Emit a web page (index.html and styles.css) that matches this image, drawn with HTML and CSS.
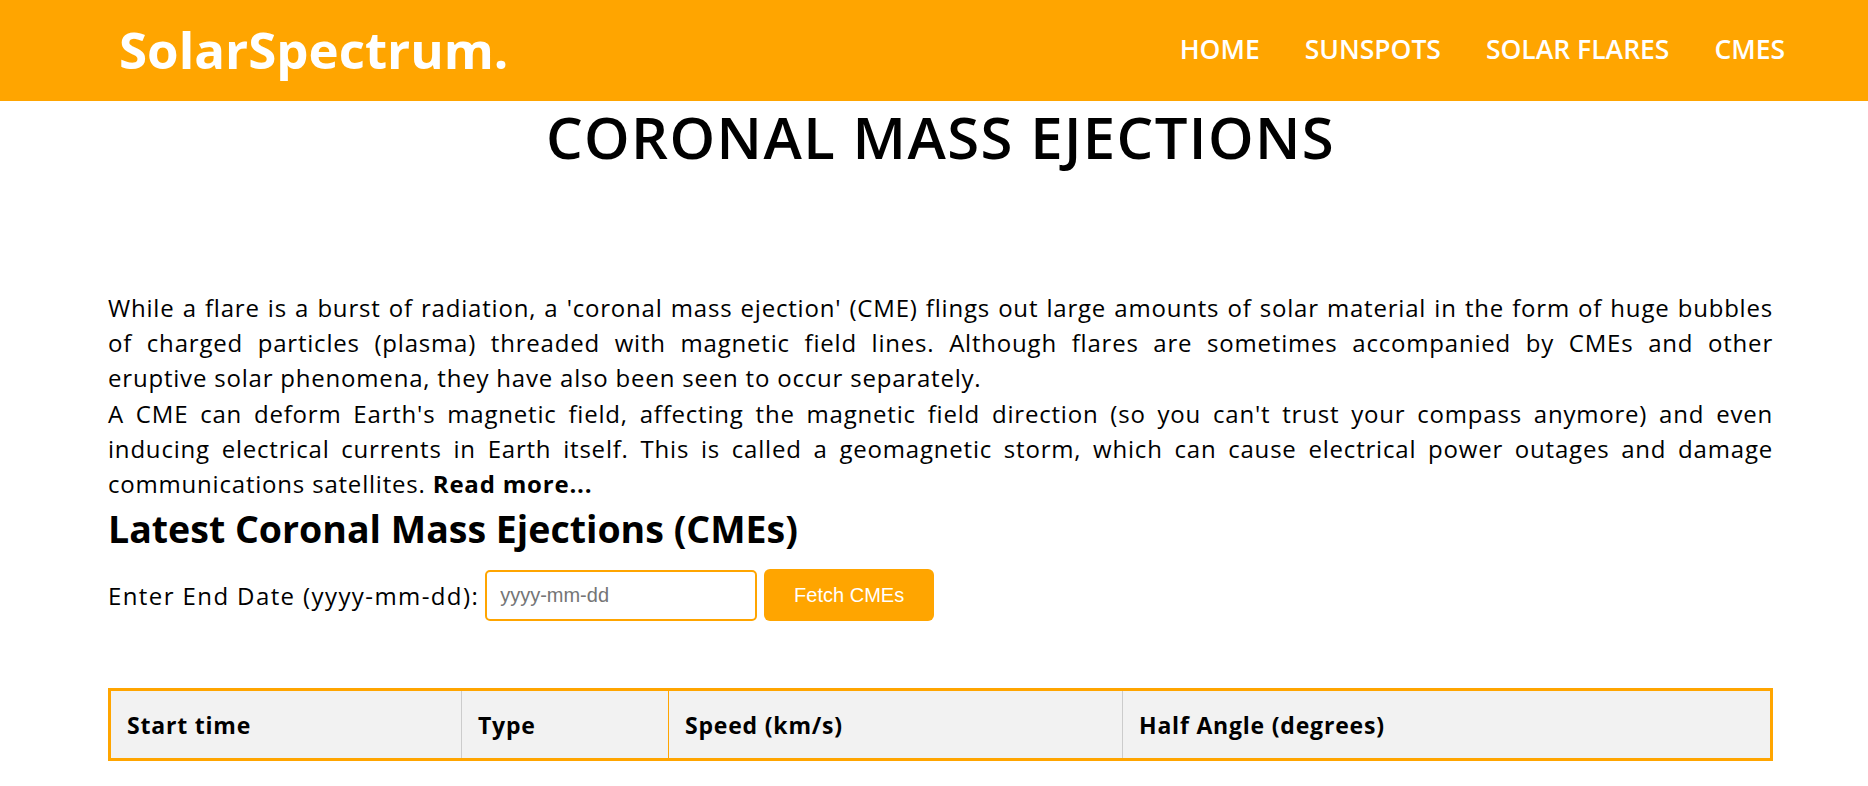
FILE: index.html
```html
<!DOCTYPE html>
<html lang="en">
<head>
<meta charset="utf-8">
<title>SolarSpectrum - CMEs</title>
<link rel="stylesheet" href="styles.css">
</head>
<body>
<header class="site-header">
  <div class="logo">SolarSpectrum.</div>
  <nav>
    <ul class="nav-list">
      <li><a href="#">HOME</a></li>
      <li><a href="#">SUNSPOTS</a></li>
      <li><a href="#">SOLAR FLARES</a></li>
      <li><a href="#">CMES</a></li>
    </ul>
  </nav>
</header>
<main class="content">
  <h1 class="page-title">CORONAL MASS EJECTIONS</h1>
  <p class="intro"><span class="intro-lead">While a flare is a burst of radiation, a 'coronal mass ejection' (CME) flings out large amounts of solar material in the form of huge bubbles of charged particles (plasma) threaded with magnetic field lines. Although flares are sometimes accompanied by CMEs and other</span> eruptive solar phenomena, they have also been seen to occur separately.<br>A CME can deform Earth's magnetic field, affecting the magnetic field direction (so you can't trust your compass anymore) and even inducing electrical currents in Earth itself. This is called a geomagnetic storm, which can cause electrical power outages and damage communications satellites. <a class="read-more" href="#">Read more...</a></p>
  <h2 class="section-title">Latest Coronal Mass Ejections (CMEs)</h2>
  <form class="date-form">
    <label class="date-label" for="endDate">Enter End Date (yyyy-mm-dd):</label>
    <input class="date-input" id="endDate" type="text" placeholder="yyyy-mm-dd">
    <button class="fetch-btn" type="button">Fetch CMEs</button>
  </form>
  <table class="cme-table">
    <thead>
      <tr>
        <th class="col-start">Start time</th>
        <th class="col-type">Type</th>
        <th class="col-speed">Speed (km/s)</th>
        <th class="col-angle">Half Angle (degrees)</th>
      </tr>
    </thead>
  </table>
</main>
</body>
</html>
```

FILE: styles.css
```css
* { box-sizing: border-box; }
body {
  margin: 0;
  font-family: "Open Sans", "Liberation Sans", sans-serif;
  color: #000;
  background: #fff;
}
.site-header {
  display: flex;
  align-items: center;
  justify-content: space-between;
  height: 101px;
  padding: 0 83px 0 119px;
  background: #ffa500;
}
.logo {
  margin-bottom: 4px;
  font-family: "Open Sans", sans-serif;
  font-weight: 700;
  font-size: 51px;
  color: #fff;
}
.nav-list {
  display: flex;
  gap: 45px;
  margin: 0;
  padding: 0 0 4px;
  list-style: none;
}
.nav-list a {
  color: #fff;
  text-decoration: none;
  font-weight: 600;
  font-size: 26.5px;
}
.content {
  padding: 0 95px 0 108px;
}
.page-title {
  margin: 0;
  padding-top: 1px;
  text-align: center;
  font-family: "Open Sans", sans-serif;
  font-weight: 600;
  font-size: 58px;
  letter-spacing: 1.4px;
  line-height: 70px;
}
.intro {
  margin: 118px 0 0;
  font-size: 24px;
  letter-spacing: 0.8px;
  line-height: 35.2px;
  text-align: justify;
}
.intro-lead {
  display: block;
  text-align-last: justify;
}
.read-more {
  color: #000;
  font-weight: 700;
  text-decoration: none;
}
.section-title {
  margin: 6px 0 0;
  font-size: 37.5px;
  font-weight: 700;
  line-height: 44px;
}
.date-form {
  display: flex;
  align-items: center;
  margin-top: 18px;
}
.date-label {
  font-size: 24px;
  letter-spacing: 1.4px;
  margin-right: 6px;
}
.date-input {
  width: 272px;
  height: 51px;
  padding: 0 13px;
  border: 2px solid #ffa500;
  border-radius: 5px;
  font-family: "Liberation Sans", Arial, sans-serif;
  font-size: 20px;
  outline: none;
}
.date-input::placeholder { color: #757575; }
.fetch-btn {
  width: 170px;
  height: 52px;
  margin-left: 7px;
  border: none;
  border-radius: 6px;
  background: #ffa500;
  color: #fff;
  font-family: "Liberation Sans", Arial, sans-serif;
  font-size: 20px;
}
.cme-table {
  width: 100%;
  margin-top: 67px;
  border-collapse: collapse;
  border: 3px solid #ffa500;
}
.cme-table th {
  height: 70px;
  padding: 0 16px;
  background: #f2f2f2;
  text-align: left;
  font-size: 23px;
  letter-spacing: 0.8px;
  font-weight: 700;
  border-right: 1px solid #ccc;
}
.col-start { width: 352px; }
.col-type { width: 207px; border-right-color: #ffa500 !important; }
.col-speed { width: 454px; }
```
